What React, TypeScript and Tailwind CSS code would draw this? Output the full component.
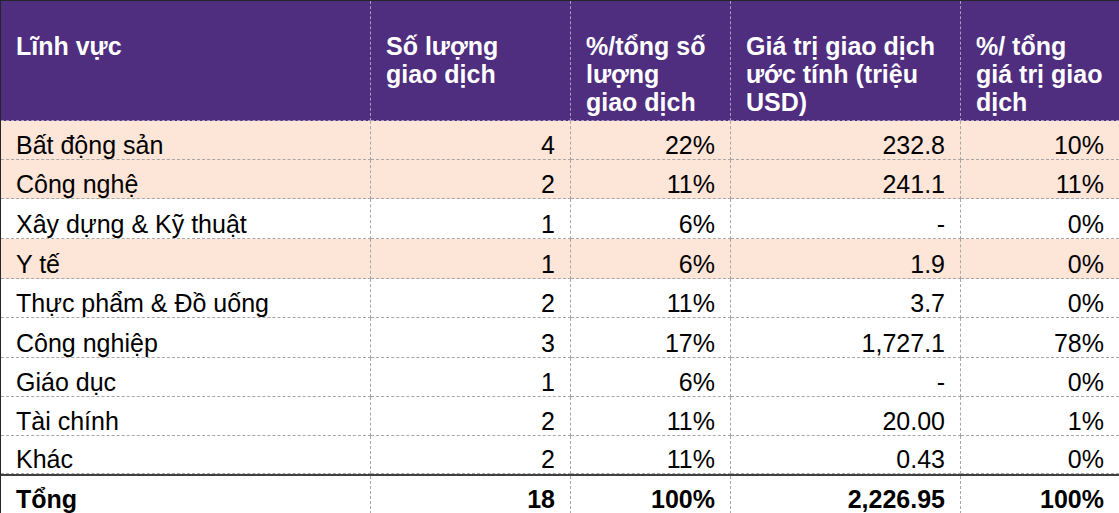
import React from "react";

type Row = {
  name: string;
  count: string;
  countPct: string;
  value: string;
  valuePct: string;
  shade: boolean;
  h: string;
};

const rows: Row[] = [
  { name: "Bất động sản", count: "4", countPct: "22%", value: "232.8", valuePct: "10%", shade: true, h: "h-[39px]" },
  { name: "Công nghệ", count: "2", countPct: "11%", value: "241.1", valuePct: "11%", shade: true, h: "h-[39px]" },
  { name: "Xây dựng & Kỹ thuật", count: "1", countPct: "6%", value: "-", valuePct: "0%", shade: false, h: "h-[40px]" },
  { name: "Y tế", count: "1", countPct: "6%", value: "1.9", valuePct: "0%", shade: true, h: "h-[40px]" },
  { name: "Thực phẩm & Đồ uống", count: "2", countPct: "11%", value: "3.7", valuePct: "0%", shade: false, h: "h-[39px]" },
  { name: "Công nghiệp", count: "3", countPct: "17%", value: "1,727.1", valuePct: "78%", shade: false, h: "h-[40px]" },
  { name: "Giáo dục", count: "1", countPct: "6%", value: "-", valuePct: "0%", shade: false, h: "h-[39px]" },
  { name: "Tài chính", count: "2", countPct: "11%", value: "20.00", valuePct: "1%", shade: false, h: "h-[39px]" },
  { name: "Khác", count: "2", countPct: "11%", value: "0.43", valuePct: "0%", shade: false, h: "h-[38px]" },
];

const cols = "grid grid-cols-[370px_200px_160px_230px_1fr]";

const Head = ({ children, last }: { children: React.ReactNode; last?: boolean }) => (
  <div
    className={`px-[15px] pt-[31px] leading-[28px] font-bold text-white border-b border-dashed border-[#a99bbf] ${
      last ? "" : "border-r"
    }`}
  >
    {children}
  </div>
);

const Cell = ({ children, right, last }: { children: React.ReactNode; right?: boolean; last?: boolean }) => (
  <div
    className={`flex items-end px-[15px] pb-0 border-b border-dashed border-[#a6a6a6] ${last ? "" : "border-r"} ${
      right ? "justify-end" : ""
    }`}
  >
    {children}
  </div>
);

export default function App() {
  return (
    <div className="w-[1119px] h-[513px] overflow-hidden bg-white text-black text-[25px] font-['Liberation_Sans',Arial,sans-serif]">
      <div className="border-l border-t border-[#262626]">
        <div className={`${cols} h-[120px] bg-[#4f2d7f]`}>
          <Head>Lĩnh vực</Head>
          <Head>
            Số lượng
            <br />
            giao dịch
          </Head>
          <Head>
            %/tổng số
            <br />
            lượng
            <br />
            giao dịch
          </Head>
          <Head>
            Giá trị giao dịch
            <br />
            ước tính (triệu
            <br />
            USD)
          </Head>
          <Head last>
            %/ tổng
            <br />
            giá trị giao
            <br />
            dịch
          </Head>
        </div>
        {rows.map((r) => (
          <div key={r.name} className={`${cols} ${r.h} leading-[28px] ${r.shade ? "bg-[#fde5d8]" : "bg-white"}`}>
            <Cell>{r.name}</Cell>
            <Cell right>{r.count}</Cell>
            <Cell right>{r.countPct}</Cell>
            <Cell right>{r.value}</Cell>
            <Cell right last>
              {r.valuePct}
            </Cell>
          </div>
        ))}
        <div className={`${cols} h-[40px] leading-[28px] font-bold border-t-2 border-[#404040]`}>
          <Cell>Tổng</Cell>
          <Cell right>18</Cell>
          <Cell right>100%</Cell>
          <Cell right>2,226.95</Cell>
          <Cell right last>
            100%
          </Cell>
        </div>
      </div>
    </div>
  );
}
